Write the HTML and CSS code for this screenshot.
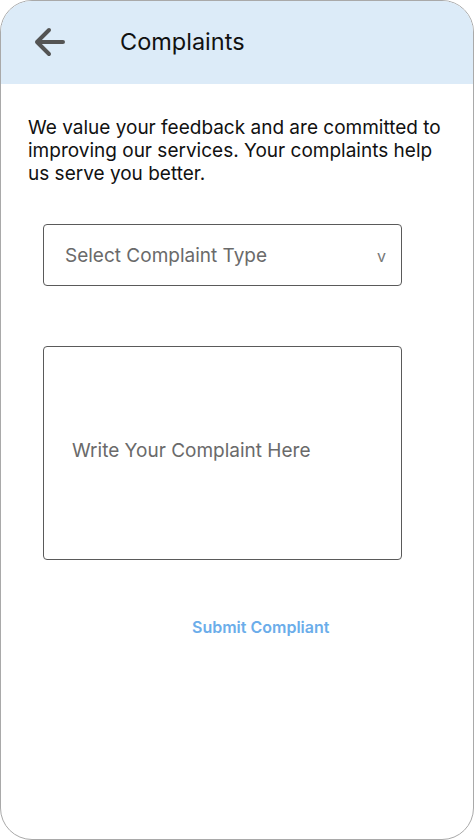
FILE: index.html
```html
<!DOCTYPE html>
<html>
<head>
<meta charset="utf-8">
<link rel="stylesheet" href="styles.css">
</head>
<body>
<div class="phone">
  <header class="header">
    <svg class="back" width="34" height="32" viewBox="0 0 34 32">
      <path d="M4 16 H30 M16 4 L4 16 L16 28" fill="none" stroke="#545454" stroke-width="4" stroke-linecap="round" stroke-linejoin="round"/>
    </svg>
    <h1 class="title">Complaints</h1>
  </header>
  <main class="content">
    <p class="intro">We value your feedback and are committed to improving our services. Your complaints help us serve you better.</p>
    <div class="select">
      <span class="placeholder">Select Complaint Type</span>
      <span class="caret">v</span>
    </div>
    <div class="textarea">
      <span class="placeholder">Write Your Complaint Here</span>
    </div>
    <div class="submit-row">
      <span class="submit">Submit Compliant</span>
    </div>
  </main>
</div>
</body>
</html>
```
FILE: styles.css
```css
* { box-sizing: border-box; }
html, body { margin: 0; padding: 0; background: #fff; }
body { font-family: Inter, "Noto Sans", sans-serif; }
.phone {
  width: 474px;
  height: 840px;
  border: 1px solid #a9a9a9;
  border-radius: 32px;
  overflow: hidden;
  background: #fff;
}
.header {
  height: 83px;
  background: #dcebf8;
  display: flex;
  align-items: center;
  padding-left: 32px;
  padding-bottom: 2px;
}
.back { display: block; }
.title {
  margin: 0 0 0 53px;
  font-size: 23.5px;
  font-weight: 400;
  color: #111;
}
.content { padding: 32px 0 0 27px; }
.intro {
  margin: 0;
  font-size: 19px;
  line-height: 23px;
  color: #111;
  width: 418px;
}
.select {
  margin: 39px 0 0 15px;
  width: 359px;
  height: 62px;
  border: 1px solid #5a5a5a;
  border-radius: 4px;
  display: flex;
  align-items: center;
  justify-content: space-between;
  padding: 0 15px 0 21px;
}
.placeholder { font-size: 19px; color: #6a6a6a; }
.caret { font-size: 16px; color: #777; margin-top: 2px; }
.textarea {
  margin: 60px 0 0 15px;
  width: 359px;
  height: 214px;
  border: 1px solid #5a5a5a;
  border-radius: 4px;
  display: flex;
  align-items: center;
  padding: 0 0 6px 28px;
}
.submit-row {
  margin-top: 57px;
  padding-left: 164px;
}
.submit {
  font-size: 16px;
  font-weight: 600;
  color: #6badea;
}
```
